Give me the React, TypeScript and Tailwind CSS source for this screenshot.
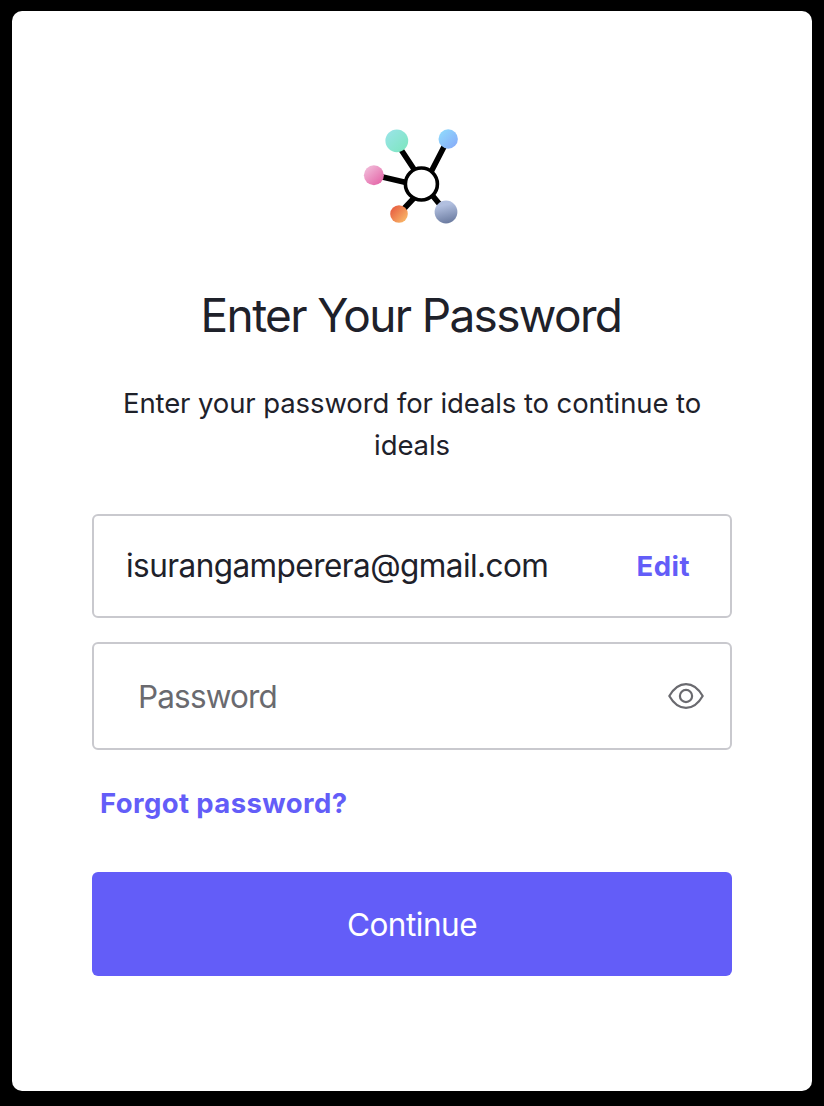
import React from "react";

function Logo() {
  return (
    <svg width="104" height="104" viewBox="360 124 104 104" fill="none" aria-hidden="true">
      <defs>
        <linearGradient id="teal" x1="0" y1="0" x2="1" y2="1"><stop stopColor="#9be4ea" /><stop offset="1" stopColor="#7ce6bd" /></linearGradient>
        <linearGradient id="blue" x1="0" y1="0" x2="1" y2="1"><stop stopColor="#90defd" /><stop offset="1" stopColor="#87a8f8" /></linearGradient>
        <linearGradient id="pink" x1="0.1" y1="0.1" x2="0.8" y2="0.9"><stop stopColor="#f1bbd9" /><stop offset="1" stopColor="#e56aaa" /></linearGradient>
        <linearGradient id="orange" x1="0.1" y1="0.1" x2="0.9" y2="0.8"><stop stopColor="#e75c40" /><stop offset="1" stopColor="#f8b366" /></linearGradient>
        <linearGradient id="slate" x1="0.4" y1="0.2" x2="0.6" y2="1"><stop stopColor="#b1bfdf" /><stop offset="1" stopColor="#6a7a9f" /></linearGradient>
      </defs>
      <path d="M397 143.500l17.500 26.500M448 139l-16.500 32M374 175l32 7.500M398 215l16-17M446 212l-14-17" stroke="#000" strokeWidth="5.600" />
      <circle cx="421.400" cy="184" r="16" fill="#fff" stroke="#000" strokeWidth="3.600" />
      <circle cx="396.800" cy="140.800" r="11.400" fill="url(#teal)" />
      <circle cx="448.200" cy="139" r="9.700" fill="url(#blue)" />
      <circle cx="373.900" cy="175.200" r="10" fill="url(#pink)" />
      <circle cx="399" cy="214" r="8.800" fill="url(#orange)" />
      <circle cx="446" cy="212" r="11.400" fill="url(#slate)" />
    </svg>
  );
}

export default function App() {
  return (
    <main className="h-[1106px] w-[824px] bg-black px-3 pt-[11px] font-['Inter',sans-serif] text-[#1e212a]">
      <section className="flex h-[1080px] flex-col items-center rounded-[10px] bg-white px-20 pt-[113px]">
        <div className="h-[104px] w-[104px]"><Logo /></div>
        <h1 className="mt-[59px] h-14 whitespace-nowrap pr-0.5 text-[46px] leading-[56px] tracking-[-1.65px]">Enter Your Password</h1>
        <p className="mt-[39px] text-center text-[27.5px] leading-[42px] tracking-[-0.1px]">Enter your password for ideals to continue to<br />ideals</p>
        <div className="mt-[48px] flex h-[104px] w-full items-center justify-between rounded-[6px] border-2 border-[#c9c9ce] pl-8 pr-10">
          <span className="text-[31.5px] tracking-[-0.56px]">isurangamperera@gmail.com</span>
          <a className="pt-0.5 text-[27.5px] font-bold tracking-[0.5px] text-[#635df8]">Edit</a>
        </div>
        <div className="mt-6 flex h-[108px] w-full items-center justify-between rounded-[6px] border-2 border-[#c9c9ce] pl-11 pr-[26px] text-[#6a6a6f]">
          <span className="pt-px text-[31.5px] tracking-[-0.85px]">Password</span>
          <svg width="36" height="28" viewBox="0 0 36 28" fill="none" stroke="currentColor" strokeWidth="2.200" strokeLinejoin="round"><path d="M1.300 14C6 5.800 11.800 2.100 18 2.100S30 5.800 34.700 14C30 22.200 24.200 25.900 18 25.900S6 22.200 1.300 14Z" /><circle cx="18" cy="14" r="6.100" /></svg>
        </div>
        <a className="ml-4 mt-8 w-full text-[27.5px] leading-[42px] font-bold tracking-[0.4px] text-[#635df8]">Forgot password?</a>
        <button className="mt-12 h-[104px] w-full rounded-[6px] bg-[#635df8] pt-px text-[31.5px] tracking-[-0.5px] text-white">Continue</button>
      </section>
    </main>
  );
}
